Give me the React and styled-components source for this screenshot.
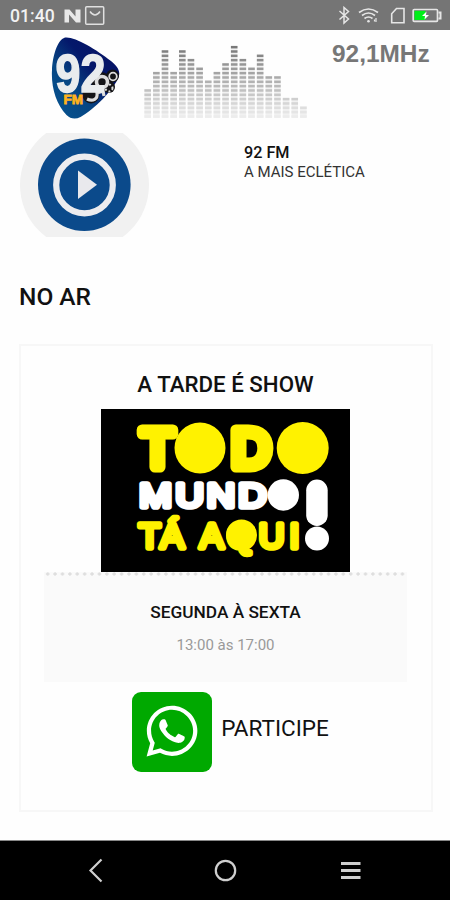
import React from "react";
import styled, { createGlobalStyle } from "styled-components";
import { FaWhatsapp } from "react-icons/fa";

const bars = [7, 11, 16, 11, 16, 14, 12, 9, 11, 13, 17, 14, 12, 15, 10, 10, 5, 5, 3];

const StatusIcons = () => (
  <svg width="106" height="20" viewBox="338 6 106 20" fill="none" stroke="#e6e6e6">
    <path d="M339.500 11l9 8-4.500 4V7.500l4.500 4-9 8" strokeWidth="1.500" />
    <g strokeWidth="1.700">
      <path d="M359 12.500q9.500-7 19 0" />
      <path d="M362 15.500q6.500-5 13 0" />
      <path d="M364.500 18.500q4-3 8 0" />
    </g>
    <circle cx="368.500" cy="21.300" r="1.300" fill="#e6e6e6" stroke="none" />
    <path d="M376 18v4M374.500 19.500v2" strokeWidth="1.200" />
    <path d="M396.500 8.500h7.500v14.200h-12.300v-9z" strokeWidth="1.600" />
    <rect x="413.200" y="9.500" width="24.300" height="11.800" rx="1" strokeWidth="1.700" />
    <rect x="414.500" y="10.800" width="11" height="9.200" fill="#00ee18" stroke="none" />
    <path d="M438.500 12.500h2v6h-2" strokeWidth="2" />
    <path d="M426.500 11.500l-4.500 4.500h3l-.5 3.500 4.500-4.500h-3z" fill="#fff" stroke="none" />
  </svg>
);

const StationLogo = () => (
  <svg width="70" height="84" viewBox="50 36 70 84">
    <defs>
      <linearGradient id="pick" x1="0" y1="1" x2="1" y2="0">
        <stop offset="0" stopColor="#075592" />
        <stop offset="0.35" stopColor="#064683" />
        <stop offset="0.6" stopColor="#04186b" />
        <stop offset="1" stopColor="#071061" />
      </linearGradient>
    </defs>
    <path
      d="M65 37.500C74 36 96 49 111 61c6 5 10 10 7.500 16-4 12-25 33-38 40-5 2.500-10 2-14-2C56 104 51 87 52 70c.5-13 5-30 13-32.500z"
      fill="url(#pick)"
    />
    <g fill="#141417">
      <circle cx="101" cy="82" r="10" />
      <circle cx="112.500" cy="76" r="6.500" />
      <circle cx="91" cy="95" r="8.500" />
      <circle cx="109" cy="87" r="6" />
    </g>
    <g fill="none" stroke="#ddd">
      <circle cx="102" cy="82" r="5.500" strokeWidth="3.600" />
      <circle cx="113" cy="76.500" r="3.800" strokeWidth="1.800" />
      <circle cx="109" cy="88" r="3.500" strokeWidth="2" strokeDasharray="2 2" />
      <path d="M87 99c6 3 11 0 10-6l6-2 1 5" strokeWidth="3.200" />
    </g>
    <g transform="translate(80.500 92) scale(.83 1)">
      <LogoText textAnchor="middle" fontSize="54" fill="#e9ecee" stroke="#e9ecee" strokeWidth="1.600">92</LogoText>
    </g>
    <LogoText x="63.500" y="104" fontSize="13.500" fill="#ffb21c" stroke="#ffb21c" strokeWidth=".8">FM</LogoText>
  </svg>
);

const Equalizer = () => (
  <svg width="164" height="76" viewBox="144 43 164 76">
    {bars.map((count, col) => (
      <g key={col}>
        <rect
          x={144.400 + col * 8.650}
          y={118 - count * 4.330 + 1.500}
          width="6.600"
          height={count * 4.330 - 1.500}
          fill="#f1f1f1"
        />
        {Array.from({ length: count }, (_, row) => {
          const shade = Math.round(236 - row * 7.200);
          return (
            <rect
              key={row}
              x={144.400 + col * 8.650}
              y={115.200 - row * 4.330}
              width="6.600"
              height="2.500"
              fill={`rgb(${shade},${shade},${shade})`}
            />
          );
        })}
      </g>
    ))}
  </svg>
);

const PlayIcon = () => (
  <svg width="130" height="104" viewBox="20 132.500 130 104">
    <circle cx="84.500" cy="184.500" r="64.500" fill="#f1f1f1" />
    <circle cx="84.300" cy="184.200" r="46.300" fill="#0b4a8b" />
    <circle cx="84.500" cy="184.500" r="28.300" fill="none" stroke="#ececef" strokeWidth="6.200" />
    <path d="M78 170v28.500l19-14.300z" fill="#e9e9ed" />
  </svg>
);

const ShowBanner = () => (
  <Banner viewBox="101 409 249 163">
    <g fill="#fff200" stroke="#fff200">
      <circle cx="200" cy="448" r="25.500" stroke="none" />
      <circle cx="302.700" cy="448" r="26" stroke="none" />
      <BannerText y="467" fontSize="54" strokeWidth="11">
        <tspan x="157.500">T</tspan>
        <tspan x="200" strokeWidth="4" fontSize="48" dy="-2">O</tspan>
        <tspan x="251" dy="2">D</tspan>
        <tspan x="302.700" strokeWidth="4" fontSize="48" dy="-2">O</tspan>
      </BannerText>
      <circle cx="241.500" cy="535" r="15.500" stroke="none" />
      <BannerText x="149.500 172 185 211.500 241 271.500 294.500" y="547.500" fontSize="35.500" strokeWidth="5.500">TÁ AQUI</BannerText>
    </g>
    <g fill="#fff" stroke="#fff">
      <circle cx="283.300" cy="495" r="15.700" stroke="none" />
      <g transform="scale(1.150 1)">
        <BannerText x="135.200 164.800 192 219.500" y="507" fontSize="34" strokeWidth="5.500">
          MUND<tspan x="246.300" fontSize="30" dy="-2" strokeWidth="3">O</tspan>
        </BannerText>
      </g>
      <rect x="306.200" y="479.500" width="21.500" height="46.500" rx="10.700" stroke="none" />
      <circle cx="317" cy="538.500" r="12" stroke="none" />
      <BannerText x="317" y="540" fontSize="76" strokeWidth="0">!</BannerText>
    </g>
  </Banner>
);

const App = () => {
  return (
    <>
      <GlobalStyle />
      <Screen>
        <StatusBar>
          <Clock>01:40</Clock>
          <svg width="42" height="22" viewBox="63 5 42 22" fill="none">
            <path d="M64.500 9.500h5l6 7V9.500h5v13h-4.500l-7-8v8h-4.500z" fill="#e8e8e8" />
            <rect x="85.700" y="6.700" width="18" height="17.500" rx="1" stroke="#e0e0e0" strokeWidth="1.500" />
            <path d="M90 11.500q5 7 10 0" stroke="#e0e0e0" strokeWidth="1.500" />
          </svg>
          <Spacer />
          <StatusIcons />
        </StatusBar>
        <Header>
          <StationLogo />
          <Equalizer />
          <Frequency>92,1MHz</Frequency>
        </Header>
        <Player>
          <PlayButton aria-label="Play">
            <PlayIcon />
          </PlayButton>
          <Station>
            <StationName>92 FM</StationName>
            <Slogan>A MAIS ECLÉTICA</Slogan>
          </Station>
        </Player>
        <SectionTitle>NO AR</SectionTitle>
        <Card>
          <ShowTitle>A TARDE É SHOW</ShowTitle>
          <ShowBanner />
          <Schedule>
            <Days>SEGUNDA À SEXTA</Days>
            <Hours>13:00 às 17:00</Hours>
          </Schedule>
          <Participate>
            <WhatsappBadge>
              <FaWhatsapp size={58} />
            </WhatsappBadge>
            <ParticipateLabel>PARTICIPE</ParticipateLabel>
          </Participate>
        </Card>
        <NavBar>
          <svg width="450" height="58" viewBox="0 841 450 58" fill="none" stroke="#cfcfcf">
            <path d="M101.500 859.500l-11 11 11 11" strokeWidth="2.200" />
            <circle cx="225.500" cy="870.500" r="9.700" strokeWidth="2.200" />
            <path d="M341 863.500h19.500M341 870.500h19.500M341 877.500h19.500" strokeWidth="3.200" />
          </svg>
        </NavBar>
      </Screen>
    </>
  );
};

const GlobalStyle = createGlobalStyle`
  * {
    box-sizing: border-box;
  }
  body {
    margin: 0;
    background: #fefefe;
    font-family: Roboto, sans-serif;
    color: #111;
  }
  svg {
    display: block;
    flex: none;
  }
`;

const LogoText = styled.text`
  font-family: "Liberation Sans", sans-serif;
  font-weight: 700;
`;

const BannerText = styled.text`
  font-family: "Liberation Sans", sans-serif;
  text-anchor: middle;
  stroke-linejoin: round;
`;

const Screen = styled.div`
  width: 450px;
  height: 900px;
  display: flex;
  flex-direction: column;
  overflow: hidden;
`;

const StatusBar = styled.div`
  height: 30px;
  flex: none;
  display: flex;
  align-items: center;
  padding: 2px 6px 0 10px;
  background: #757575;
`;

const Clock = styled.span`
  width: 53px;
  font-size: 17.600px;
  font-weight: 500;
  color: #f2f2f2;
`;

const Spacer = styled.div`
  flex: 1;
`;

const Header = styled.div`
  height: 102px;
  flex: none;
  display: flex;
  align-items: flex-start;
  padding: 6px 0 0 50px;

  svg + svg {
    margin: 7px 0 0 24px;
  }
`;

const Frequency = styled.div`
  margin: 4px 0 0 24px;
  font-family: "Liberation Sans", sans-serif;
  font-size: 24.400px;
  font-weight: 700;
  line-height: 28px;
  color: #777;
`;

const Player = styled.div`
  height: 105px;
  flex: none;
  display: flex;
  padding-left: 20px;
`;

const PlayButton = styled.button`
  height: 105px;
  padding: 0;
  border: 0;
  background: none;
`;

const Station = styled.div`
  margin: 11px 0 0 94px;
`;

const StationName = styled.div`
  font-size: 16.200px;
  font-weight: 500;
  line-height: 20px;
`;

const Slogan = styled.div`
  font-size: 15px;
  line-height: 19px;
  color: #333;
`;

const SectionTitle = styled.h2`
  margin: 45px 0 32px 19px;
  font-size: 24.500px;
  font-weight: 500;
  line-height: 30px;
`;

const Card = styled.div`
  width: 414px;
  height: 468px;
  flex: none;
  margin-left: 19px;
  padding-right: 1px;
  border: 2px solid #f7f7f7;
  display: flex;
  flex-direction: column;
  align-items: center;
`;

const ShowTitle = styled.h3`
  margin: 25px 0 11px;
  font-size: 22.300px;
  font-weight: 500;
  line-height: 27px;
`;

const Banner = styled.svg`
  width: 249px;
  height: 163px;
  background: #000;
`;

const Schedule = styled.div`
  width: 363px;
  height: 110px;
  background:
    radial-gradient(circle, #dedede 1.300px, transparent 2px) 0 0 / 7.400px 4px repeat-x,
    #fafafa;
  padding-top: 29px;
  text-align: center;
`;

const Days = styled.div`
  font-size: 17.300px;
  font-weight: 500;
  line-height: 22px;
`;

const Hours = styled.div`
  margin-top: 12px;
  font-size: 15px;
  line-height: 20px;
  color: #999;
`;

const Participate = styled.div`
  display: flex;
  margin-top: 10px;
  padding-left: 10px;
`;

const WhatsappBadge = styled.div`
  width: 80px;
  height: 80px;
  display: flex;
  align-items: center;
  justify-content: center;
  padding-bottom: 2px;
  border-radius: 9px;
  background: #00a900;
  color: #fff;
`;

const ParticipateLabel = styled.div`
  margin: 22px 0 0 9px;
  font-size: 22.500px;
  line-height: 28px;
`;

const NavBar = styled.div`
  height: 60px;
  margin-top: auto;
  flex: none;
  border-top: 1px solid #888;
  background: #000;
`;

export default App;
